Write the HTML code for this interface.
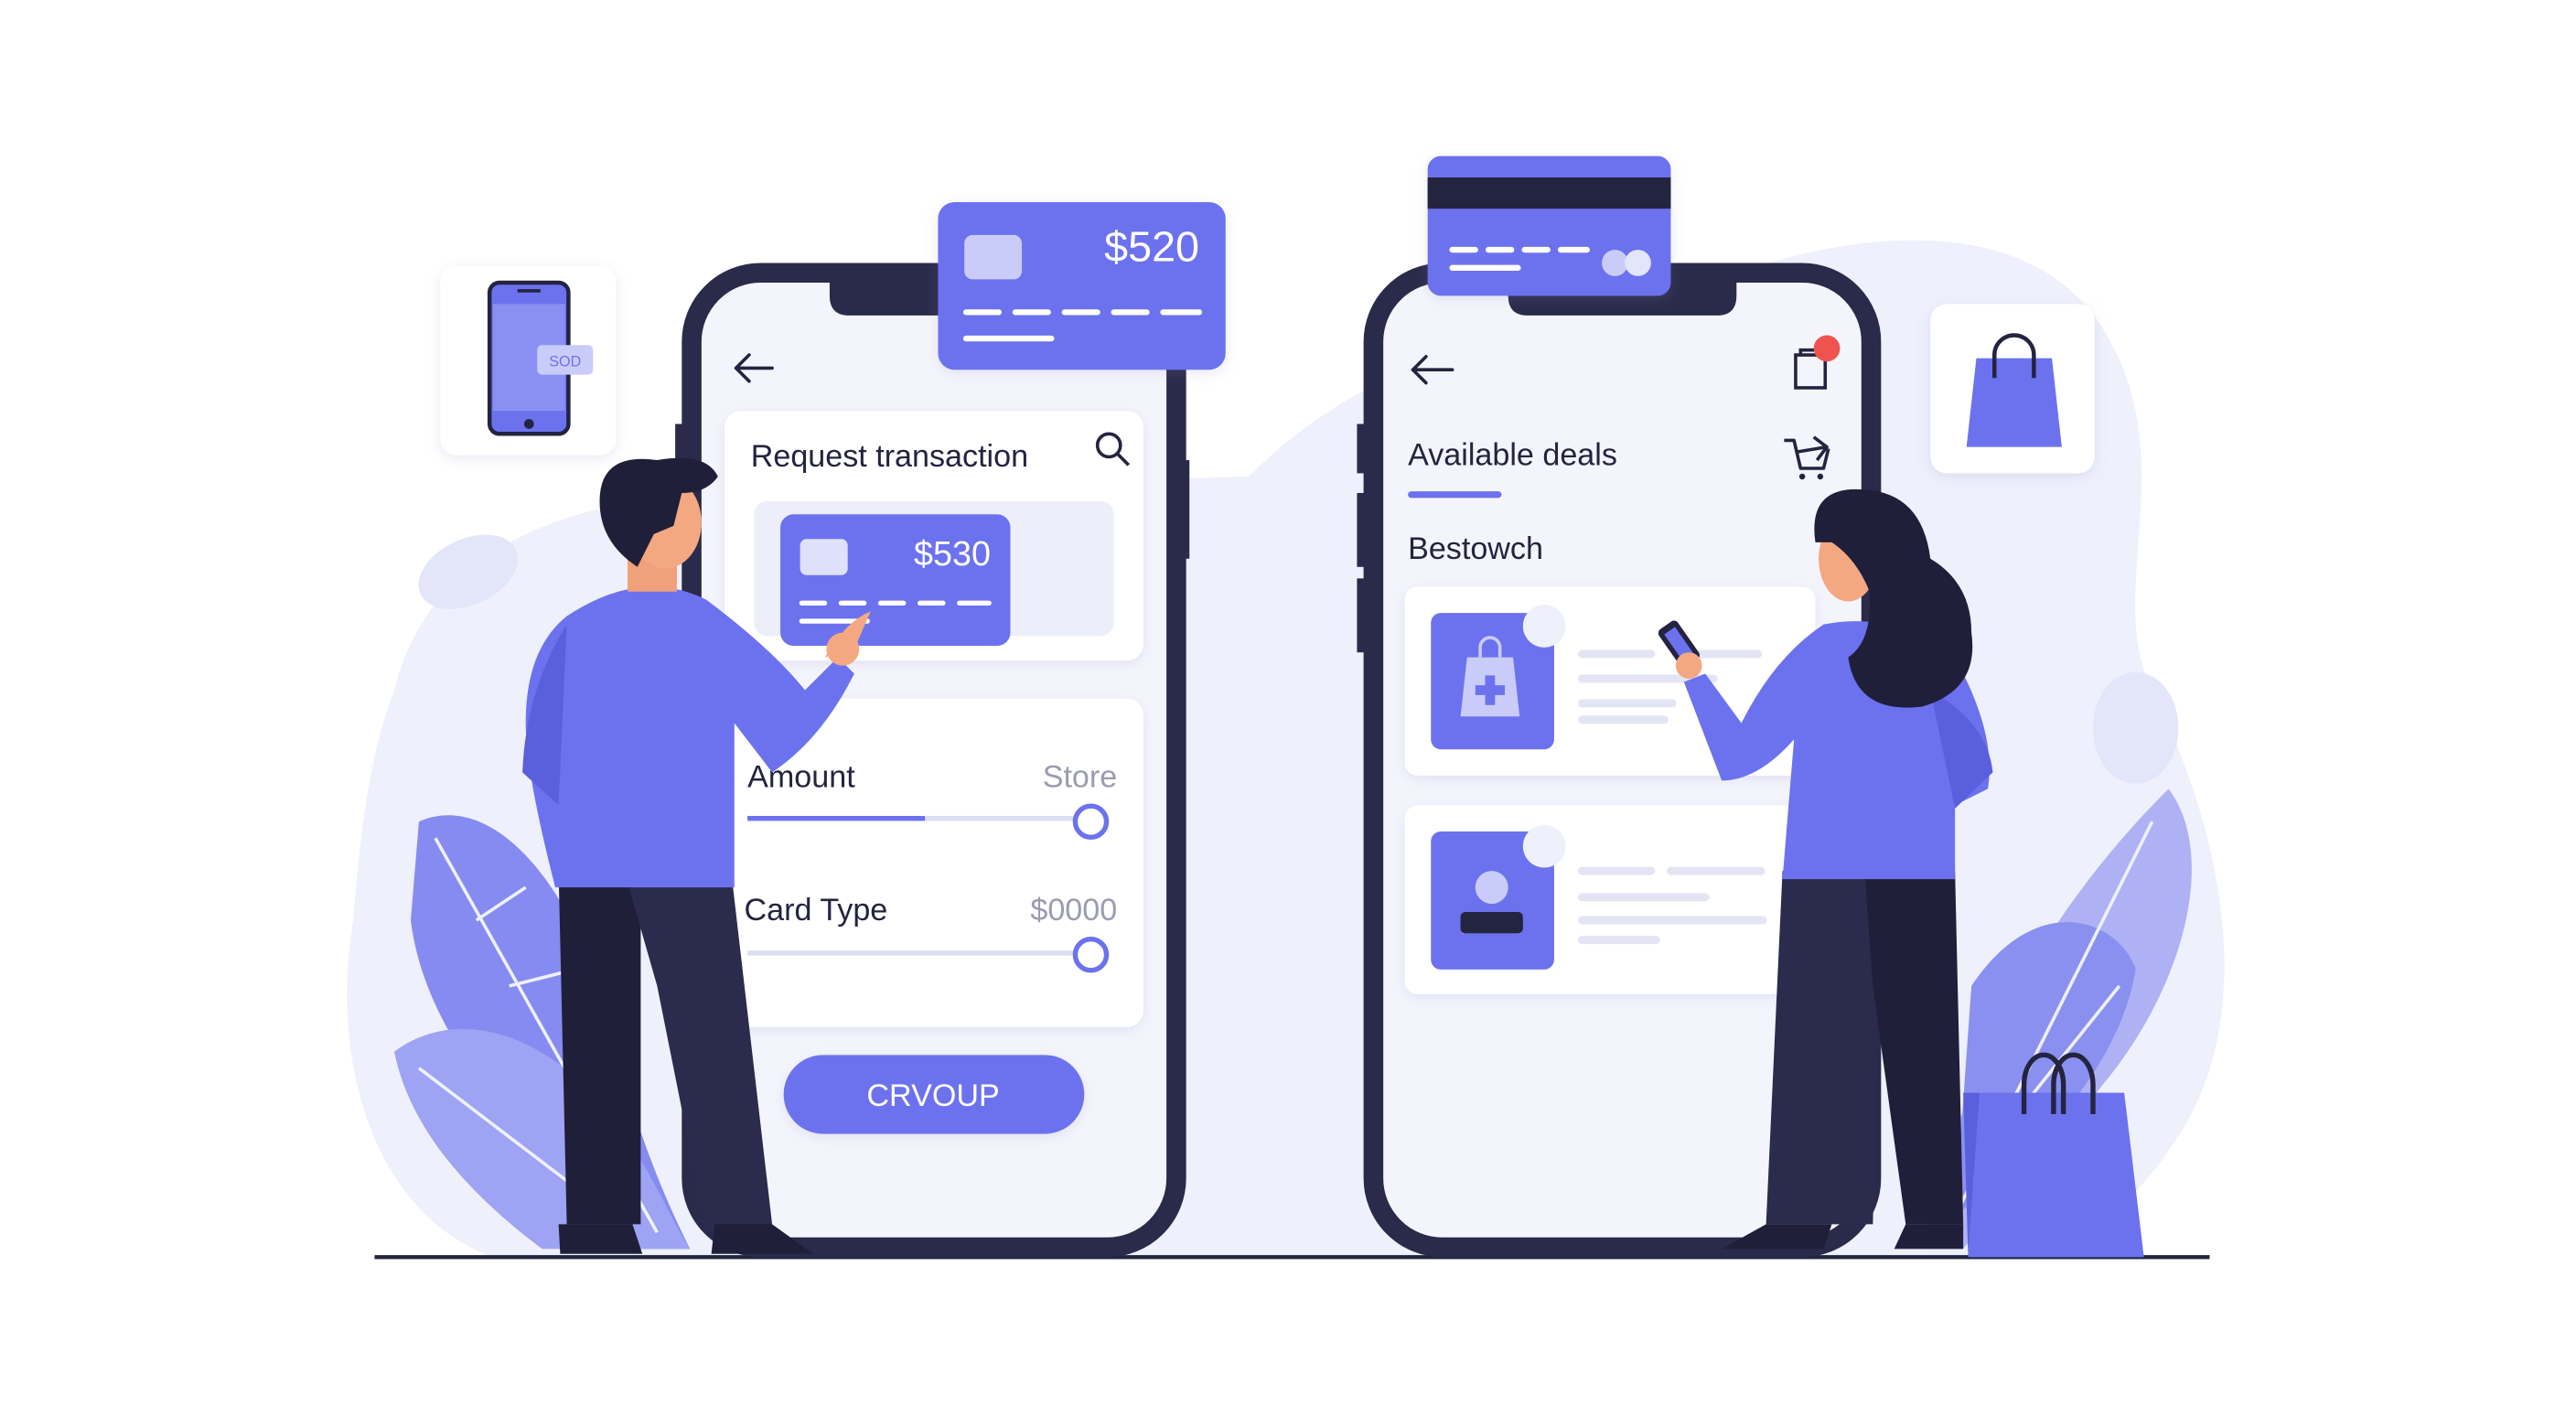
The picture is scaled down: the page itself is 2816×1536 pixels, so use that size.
<!DOCTYPE html>
<html><head><meta charset="utf-8"><style>
html,body{margin:0;padding:0;background:#fff;width:2816px;height:1536px;overflow:hidden}
svg{display:block}
text{font-family:"Liberation Sans",sans-serif}
</style></head><body>
<svg width="2816" height="1536" viewBox="0 0 1568 855" preserveAspectRatio="none" xmlns="http://www.w3.org/2000/svg">
<defs>
<filter id="sh" x="-20%" y="-20%" width="140%" height="140%"><feDropShadow dx="0" dy="2" stdDeviation="4" flood-color="#8088c0" flood-opacity="0.18"/></filter>
</defs>
<rect width="1568" height="855" fill="#fff"/>
<!-- background blob -->
<path d="M240 420 C260 340 330 310 420 300 L760 290 C820 230 900 200 1000 190 C1100 140 1230 120 1280 200 C1330 280 1280 360 1310 420 C1350 500 1380 620 1320 700 C1290 745 1250 765 1200 765 L300 765 C230 740 200 650 215 560 C220 500 225 460 240 420 Z" fill="#eef0fb"/>
<ellipse cx="285" cy="348" rx="32" ry="20" transform="rotate(-25 285 348)" fill="#e3e6f8"/>
<ellipse cx="1300" cy="443" rx="26" ry="34" fill="#e3e6f8"/>
<!-- left leaves -->
<g fill="#7a80ef" opacity="0.9">
<path d="M255 500 C300 480 350 540 370 620 C385 680 400 720 420 760 L380 760 C330 700 260 640 250 560 Z"/>
</g>
<path d="M240 640 C280 610 340 630 380 690 C400 720 410 745 420 760 L330 760 C290 730 250 690 240 640 Z" fill="#9ea3f3"/>
<g stroke="#eef0fb" stroke-width="2" fill="none"><path d="M265 510 L400 750"/><path d="M290 560 L320 540"/><path d="M310 600 L350 590"/><path d="M255 650 L360 730"/></g>
<!-- right leaves -->
<path d="M1320 480 C1350 520 1330 600 1280 660 C1250 700 1220 730 1195 760 L1170 760 C1190 680 1220 580 1320 480 Z" fill="#aeb2f5"/>
<path d="M1200 600 C1240 540 1290 560 1300 590 C1290 650 1240 700 1190 740 Z" fill="#8a90f0"/>
<g stroke="#eef0fb" stroke-width="2" fill="none"><path d="M1310 500 L1190 740"/><path d="M1290 600 L1210 700"/></g>
<!-- ground -->
<line x1="228" y1="765" x2="1345" y2="765" stroke="#23243f" stroke-width="2.5"/>

<!-- LEFT PHONE -->
<rect x="421" y="166" width="295" height="593" rx="42" fill="#f4f5fc" stroke="#2a2b4a" stroke-width="12"/>
<rect x="411" y="258" width="6" height="30" fill="#2a2b4a"/>
<rect x="718" y="280" width="6" height="60" fill="#2a2b4a"/>
<path d="M505 160 L630 160 L630 180 Q630 192 618 192 L517 192 Q505 192 505 180 Z" fill="#2a2b4a"/>
<path d="M460 224 L448 224 M448 224 L456 216 M448 224 L456 232 M448 224 L470 224" stroke="#23243f" stroke-width="2" fill="none" stroke-linecap="round"/>
<rect x="441" y="250" width="255" height="152" rx="10" fill="#fff" filter="url(#sh)"/>
<text x="457" y="284" font-size="19" fill="#23243f">Request transaction</text>
<circle cx="675" cy="271" r="7" stroke="#23243f" stroke-width="2" fill="none"/><line x1="680" y1="276" x2="687" y2="283" stroke="#23243f" stroke-width="2"/>
<rect x="459" y="305" width="219" height="82" rx="8" fill="#eceefa"/>
<rect x="475" y="313" width="140" height="80" rx="8" fill="#6c72ee"/>
<rect x="487" y="328" width="29" height="22" rx="4" fill="#dfe1fb"/>
<text x="603" y="344" font-size="21" fill="#fff" text-anchor="end">$530</text>
<g stroke="#fff" stroke-width="3" stroke-linecap="round"><path d="M488 367 h14 M512 367 h14 M536 367 h14 M560 367 h14 M584 367 h18"/><path d="M488 378 h40"/></g>
<rect x="441" y="425" width="255" height="200" rx="10" fill="#fff" filter="url(#sh)"/>
<text x="455" y="479" font-size="19" fill="#23243f">Amount</text>
<text x="680" y="479" font-size="19" fill="#9a9cb0" text-anchor="end">Store</text>
<line x1="455" y1="498" x2="665" y2="498" stroke="#dcdef2" stroke-width="3"/>
<line x1="455" y1="498" x2="563" y2="498" stroke="#6c72ee" stroke-width="3"/>
<circle cx="664" cy="500" r="9.5" fill="#fff" stroke="#6c72ee" stroke-width="3"/>
<text x="453" y="560" font-size="19" fill="#23243f">Card Type</text>
<text x="680" y="560" font-size="19" fill="#9a9cb0" text-anchor="end">$0000</text>
<line x1="455" y1="580" x2="665" y2="580" stroke="#dcdef2" stroke-width="3"/>
<circle cx="664" cy="581" r="9.5" fill="#fff" stroke="#6c72ee" stroke-width="3"/>
<rect x="477" y="642" width="183" height="48" rx="24" fill="#6c72ee" filter="url(#sh)"/>
<text x="568" y="673" font-size="19" fill="#fff" text-anchor="middle">CRVOUP</text>
<!-- top card left -->
<rect x="571" y="123" width="175" height="102" rx="10" fill="#6c72ee" filter="url(#sh)"/>
<rect x="587" y="143" width="35" height="27" rx="5" fill="#c9ccf9"/>
<text x="730" y="159" font-size="26" fill="#fff" text-anchor="end">$520</text>
<g stroke="#fff" stroke-width="3.5" stroke-linecap="round"><path d="M588 190 h20 M618 190 h20 M648 190 h20 M678 190 h20 M708 190 h22"/><path d="M588 206 h52"/></g>

<!-- RIGHT PHONE -->
<rect x="836" y="166" width="303" height="593" rx="42" fill="#f4f5fc" stroke="#2a2b4a" stroke-width="12"/>
<rect x="826" y="258" width="6" height="30" fill="#2a2b4a"/>
<rect x="826" y="300" width="6" height="45" fill="#2a2b4a"/>
<rect x="826" y="352" width="6" height="45" fill="#2a2b4a"/>
<path d="M918 160 L1057 160 L1057 180 Q1057 192 1045 192 L930 192 Q918 192 918 180 Z" fill="#2a2b4a"/>
<path d="M860 225 L884 225 M860 225 L868 217 M860 225 L868 233" stroke="#23243f" stroke-width="2" fill="none" stroke-linecap="round"/>
<path d="M1093 216 h18 v20 h-18 Z M1096 216 v-3 h12 v3" stroke="#23243f" stroke-width="2" fill="none"/>
<circle cx="1112" cy="212" r="8" fill="#ef5350"/>
<text x="857" y="283" font-size="19" fill="#23243f">Available deals</text>
<line x1="859" y1="301" x2="912" y2="301" stroke="#6c72ee" stroke-width="4" stroke-linecap="round"/>
<path d="M1086 268 L1092 268 L1096 285 L1110 285 L1113 273 M1094 275 L1112 272 L1104 266 M1112 272 L1106 280" stroke="#23243f" stroke-width="2" fill="none" stroke-linejoin="round"/>
<circle cx="1097" cy="290" r="1.8" fill="#23243f"/><circle cx="1108" cy="290" r="1.8" fill="#23243f"/>
<text x="857" y="340" font-size="19" fill="#23243f">Bestowch</text>
<rect x="855" y="357" width="250" height="115" rx="8" fill="#fff" filter="url(#sh)"/>
<rect x="871" y="373" width="75" height="83" rx="6" fill="#6c72ee"/>
<path d="M893 400 h28 l4 36 h-36 Z" fill="#c9ccf9"/><path d="M901 400 v-6 a6 6 0 0 1 12 0 v6" stroke="#c9ccf9" stroke-width="2" fill="none"/>
<path d="M904 411 h6 v6 h6 v6 h-6 v6 h-6 v-6 h-6 v-6 h6 Z" fill="#6c72ee"/>
<circle cx="940" cy="381" r="13" fill="#eef0fb"/>
<g stroke="#e3e5f4" stroke-width="5" stroke-linecap="round"><path d="M963 398 h42 M1030 398 h40"/><path d="M963 413 h80"/><path d="M963 428 h55"/><path d="M963 438 h50"/></g>
<rect x="855" y="490" width="250" height="115" rx="8" fill="#fff" filter="url(#sh)"/>
<rect x="871" y="506" width="75" height="84" rx="6" fill="#6c72ee"/>
<circle cx="908" cy="540" r="10" fill="#c9ccf9"/><path d="M890 568 q18 -25 36 0 Z" fill="#c9ccf9"/><rect x="889" y="555" width="38" height="13" rx="3" fill="#23243f"/>
<circle cx="940" cy="515" r="13" fill="#eef0fb"/>
<g stroke="#e3e5f4" stroke-width="5" stroke-linecap="round"><path d="M963 530 h42 M1017 530 h55"/><path d="M963 546 h75"/><path d="M963 560 h110"/><path d="M963 572 h45"/></g>
<!-- top card right -->
<rect x="869" y="95" width="148" height="85" rx="8" fill="#6c72ee" filter="url(#sh)"/>
<rect x="869" y="108" width="148" height="19" fill="#23243f"/>
<g stroke="#fff" stroke-width="3.5" stroke-linecap="round"><path d="M884 152 h14 M906 152 h14 M928 152 h14 M950 152 h16"/><path d="M884 163 h40"/></g>
<circle cx="983" cy="160" r="8" fill="#c9ccf9"/><circle cx="997" cy="160" r="8" fill="#e3e5fb"/>

<!-- small cards -->
<rect x="268" y="162" width="107" height="115" rx="10" fill="#fff" filter="url(#sh)"/>
<rect x="298" y="172" width="48" height="92" rx="6" fill="#6c72ee" stroke="#23243f" stroke-width="2.5"/>
<path d="M300 185 L344 185 L344 250 L300 250 Z" fill="#8a90f3"/>
<rect x="327" y="210" width="34" height="18" rx="3" fill="#c9ccf9"/><text x="344" y="223" font-size="9" fill="#6c72ee" text-anchor="middle">SOD</text>
<circle cx="322" cy="258" r="3" fill="#23243f"/><line x1="315" y1="177" x2="329" y2="177" stroke="#23243f" stroke-width="2"/>
<rect x="1175" y="185" width="100" height="103" rx="10" fill="#fff" filter="url(#sh)"/>
<path d="M1203 218 h46 l6 54 h-58 Z" fill="#6c72ee"/>
<path d="M1214 230 v-14 a12 12 0 0 1 24 0 v14" stroke="#23243f" stroke-width="2.5" fill="none"/>

<!-- ground bag -->
<path d="M1205 665 h88 l12 100 h-107 Z" fill="#6c72ee"/>
<path d="M1198 765 l7 -100 h-10 Z" fill="#5a60dd"/>
<path d="M1232 678 v-18 a12 18 0 0 1 24 0 v18 M1250 678 v-18 a12 18 0 0 1 24 0 v18" stroke="#23243f" stroke-width="3" fill="none"/>

<!-- MAN -->
<path d="M340 530 L390 530 L390 745 L345 745 Z" fill="#1f1f3a"/>
<path d="M380 530 L445 530 L470 745 L430 750 L400 600 Z" fill="#2a2b4d"/>
<path d="M340 745 h45 l6 18 h-50 Z" fill="#1f1f3a"/>
<path d="M435 745 h35 l25 18 h-62 Z" fill="#1f1f3a"/>
<path d="M345 375 Q390 345 430 365 Q470 395 490 420 L510 400 L520 410 Q500 450 470 470 L447 440 L447 540 L338 540 Q320 470 320 440 Q320 395 345 375 Z" fill="#6c72ee"/>
<path d="M345 380 Q320 420 318 470 L340 490 Z" fill="#5a60dd"/>
<path d="M382 330 h30 v30 h-30 Z" fill="#f0a07a"/>
<ellipse cx="405" cy="318" rx="22" ry="28" fill="#f4a882"/>
<path d="M365 305 Q365 275 400 280 Q430 275 437 290 Q430 300 415 300 L410 320 L398 325 L388 345 Q365 330 365 305 Z" fill="#1f1f3a"/>
<path d="M502 400 Q515 378 530 372 L520 395 Z" fill="#f4a882"/><circle cx="513" cy="395" r="10" fill="#f4a882"/>
<!-- WOMAN -->
<path d="M1085 530 L1145 530 L1140 745 L1075 745 Z" fill="#2a2b4d"/>
<path d="M1135 530 L1190 530 L1195 745 L1160 745 L1140 600 Z" fill="#1f1f3a"/>
<path d="M1075 745 h40 l-5 15 h-62 Z" fill="#1f1f3a"/><path d="M1160 745 h35 l0 15 h-42 Z" fill="#1f1f3a"/>
<path d="M1110 380 Q1160 370 1195 410 Q1215 450 1210 480 L1190 490 L1190 535 L1085 535 L1092 450 Q1070 475 1048 475 L1025 415 L1038 410 L1060 440 Q1080 400 1110 380 Z" fill="#6c72ee"/>
<path d="M1175 420 Q1210 440 1213 470 L1190 492 Z" fill="#5a60dd"/>
<ellipse cx="1125" cy="340" rx="18" ry="26" fill="#f4a882"/>
<path d="M1105 330 Q1100 295 1135 298 Q1170 300 1175 340 Q1200 355 1200 385 Q1205 420 1170 430 Q1130 435 1125 400 Q1140 390 1138 360 Q1130 340 1115 330 Z" fill="#1f1f3a"/>
<rect x="1015" y="378" width="14" height="28" rx="3" fill="#23243f" transform="rotate(-35 1022 392)"/>
<rect x="1018" y="382" width="8" height="20" fill="#6c72ee" transform="rotate(-35 1022 392)"/>
<circle cx="1028" cy="405" r="8" fill="#f4a882"/>
</svg>
</body></html>
